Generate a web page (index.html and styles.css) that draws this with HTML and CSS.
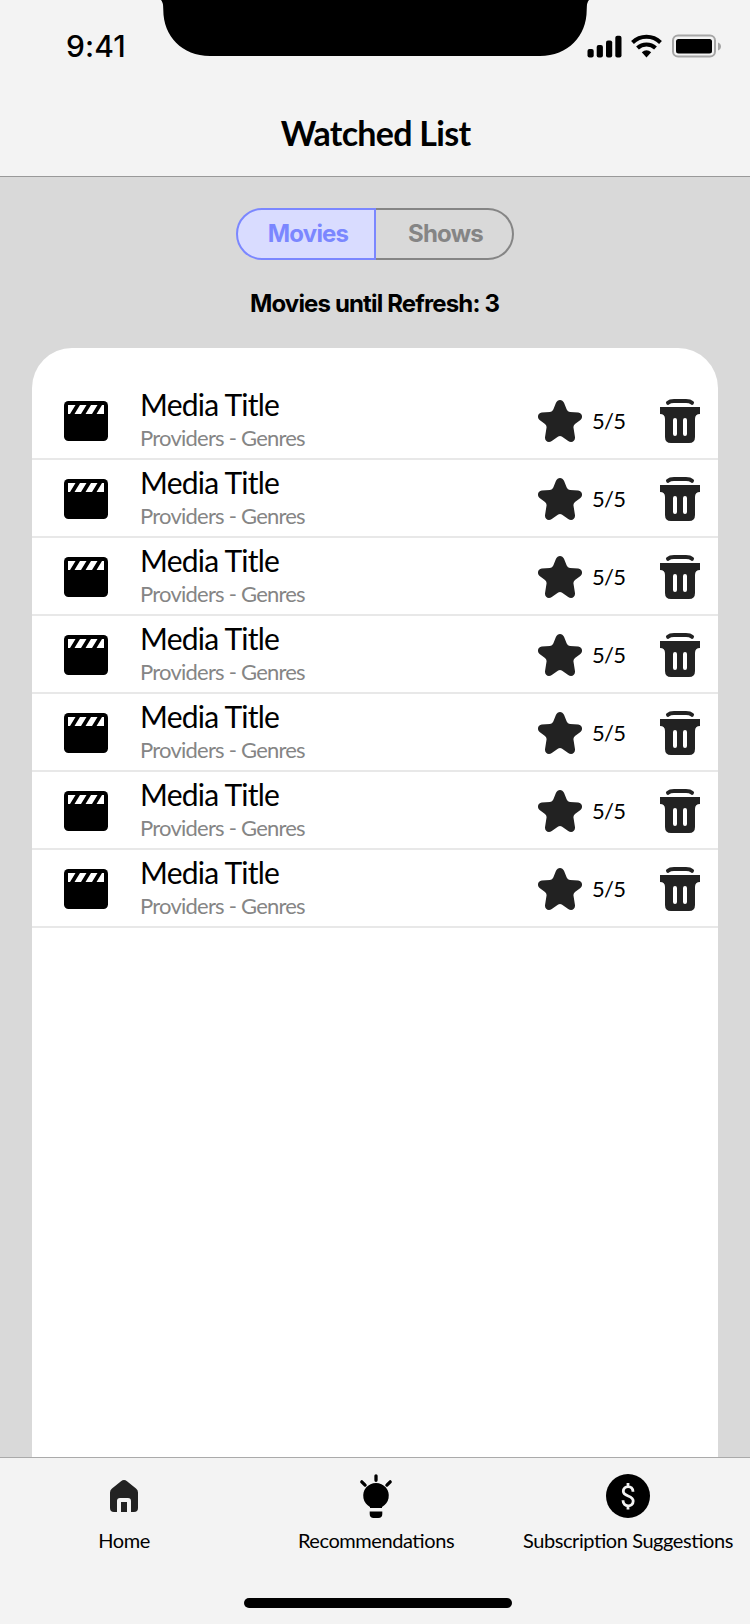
FILE: index.html
```html
<!DOCTYPE html>
<html lang="en">
<head>
<meta charset="utf-8">
<title>Watched List</title>
<link rel="stylesheet" href="styles.css">
</head>
<body>
<svg class="defs" aria-hidden="true">
  <symbol id="clapper" viewBox="0 0 44 44">
    <rect x="0" y="2" width="44" height="40" rx="4.5"/>
    <path class="cut" d="M4 6h7.500L6 15H4zM16 6h6.500l-5.500 9h-6.500zM27 6h6.500l-5.500 9h-6.500zM38 6h2v9h-7.500z"/>
  </symbol>
  <symbol id="star" viewBox="0 0 44 44">
    <path d="M18 3.800C19.500-.1 24.500-.1 26 3.800L28.700 10.500Q29.600 12.700 32 12.900L40.200 13.600C44.200 14 45.300 18.600 42.400 20.900L37 25Q35.100 26.500 35.500 28.800L37 38.300C37.300 42.400 33.300 44.300 30.200 42L23.800 37.500Q22 36.300 20.200 37.500L13.800 42C10.700 44.300 6.700 42.400 7 38.300L8.500 28.800Q8.900 26.500 7 25L1.600 20.900C-1.300 18.600-.2 14 3.800 13.600L12 12.900Q14.400 12.700 15.300 10.500Z"/>
  </symbol>
  <symbol id="trash" viewBox="0 0 40 44">
    <path class="lid" d="M8 3.800Q10 2 14 2h12q4 0 6 1.800"/>
    <path d="M0 8h40v7q-5 0-5 5v18q0 6-6 6H11q-6 0-6-6V20q0-5-5-5z"/>
    <path class="cut" d="M13 21a2 2 0 0 1 4 0v14a2 2 0 0 1-4 0zM23 21a2 2 0 0 1 4 0v14a2 2 0 0 1-4 0z"/>
  </symbol>
</svg>
<div class="screen">
  <header class="header">
    <svg class="notch" viewBox="0 0 428 56"><path d="M0 0h428q-2.300 2-2.300 10c0 26-18.700 46-46.700 46H49C21 56 2.300 36 2.300 10Q2.300 2 0 0z"/></svg>
    <div class="status">
      <span class="time">9:41</span>
      <svg class="indicators" viewBox="0 0 134 24">
        <rect x="0.500" y="15" width="6.200" height="8.500" rx="2"/><rect x="9.700" y="11" width="6.200" height="12.500" rx="2"/><rect x="19" y="6.500" width="6.200" height="17" rx="2"/><rect x="28.300" y="1.700" width="6.200" height="21.800" rx="2"/>
        <path class="wave" d="M45.500 8.500A20 20 0 0 1 73.500 8.500M50.500 14A13 13 0 0 1 68.500 14"/>
        <path d="M54.800 18.200Q59.500 14.400 64.200 18.200L59.500 23.500z"/>
        <rect class="case" x="86" y="1.500" width="42" height="21" rx="5"/>
        <rect x="89" y="5" width="36" height="14.500" rx="2.500"/>
        <path class="cap" d="M131 8.500q3 1.200 3 4t-3 4z"/>
      </svg>
    </div>
    <h1 class="title">Watched List</h1>
  </header>
  <main class="content">
    <div class="segments"><button class="segment active"><span>Movies</span></button><button class="segment"><span>Shows</span></button></div>
    <p class="refresh">Movies until Refresh: 3</p>
    <ul class="list" id="list"></ul>
  </main>
  <nav class="tabs">
    <a class="tab"><svg class="tab-icon" viewBox="0 0 44 44"><path class="soft" d="M19 7.200Q22 4.800 25 7.200L34 14.500Q36 16.200 36 18.500V34q0 4-4 4h-3V27q0-3-3-3h-8q-3 0-3 3v11h-3q-4 0-4-4V18.500Q8 16.200 10 14.500zM19 28h6v10h-6z"/></svg><span>Home</span></a>
    <a class="tab"><svg class="tab-icon" viewBox="0 0 44 44"><path d="M16 34v-1A12.800 12.800 0 1 1 28 33V34zM15.700 37.500h12.600v2.500q0 4-4 4h-4.600q-4 0-4-4z"/><path class="ray" d="M22 1.800v4.500M7.800 7.800l3.300 3.300M36.200 7.800l-3.300 3.300"/></svg><span>Recommendations</span></a>
    <a class="tab"><svg class="tab-icon" viewBox="0 0 44 44"><circle cx="22" cy="22" r="22"/><path class="dollar" d="M22 9v3.500M22 31.500V35.500M27 17.800C27 10.800 17.300 11 17.300 17.300C17.300 23 27.200 21 27.200 27C27.200 33.800 17 33.500 17 26.300"/></svg><span>Subscription Suggestions</span></a>
  </nav>
  <div class="gesture"><div class="pill"></div></div>
</div>
<template id="row">
  <li class="row">
    <svg class="clapper"><use href="#clapper"/></svg>
    <div class="media"><span class="name">Media Title</span><span class="meta">Providers - Genres</span></div>
    <svg class="star"><use href="#star"/></svg>
    <span class="score">5/5</span>
    <svg class="trash"><use href="#trash"/></svg>
  </li>
</template>
<script src="app.js"></script>
</body>
</html>
```
FILE: styles.css
```css
* { box-sizing: border-box; }
body { margin: 0; background: #f3f3f3; color: #000; font-family: Lato, sans-serif; }
.defs { position: absolute; width: 0; height: 0; }
.screen { width: 750px; height: 1624px; display: flex; flex-direction: column; overflow: hidden; }
.header { position: relative; height: 177px; flex: none; border-bottom: 1px solid #999; }
.notch { position: absolute; left: 161px; top: 0; width: 428px; height: 56px; }
.status { height: 92px; padding: 34px 29px 0 66px; display: flex; justify-content: space-between; align-items: flex-start; }
.time { font: 550 30px/24px Inter, sans-serif; letter-spacing: 0.1px; }
.indicators { width: 134px; height: 24px; }
.wave { fill: none; stroke: #000; stroke-width: 4; }
.case { fill: none; stroke: #a6a6a6; stroke-width: 2; }
.cap { fill: #a6a6a6; }
.title { margin: 19px 0 0; padding-left: 1px; text-align: center; font-size: 34px; line-height: 44px; font-weight: 700; letter-spacing: -0.72px; }
.content { flex: 1; min-height: 0; background: #d9d9d9; padding: 31px 32px 0; display: flex; flex-direction: column; align-items: center; }
.segments { display: flex; flex: none; width: 278px; height: 52px; }
.segment { flex: none; width: 138px; padding: 0 0 0 3px; border: 2px solid #858585; border-left: 0; border-radius: 0 26px 26px 0; background: none; color: #858585; font: 700 24px/30px Inter, sans-serif; letter-spacing: -0.8px; }
.segment.active { width: 140px; padding-left: 4px; border: 2px solid #7b87ff; border-radius: 26px 0 0 26px; background: #d9dcff; color: #7b87ff; }
.refresh { margin: 28px 0 0; padding-right: 1px; font: 700 24px/32px Inter, sans-serif; letter-spacing: -0.85px; }
.list { list-style: none; margin: 28px 0 0; padding: 34px 0 0; width: 100%; flex: 1; background: #fff; border-radius: 40px 40px 0 0; }
.row { height: 78px; border-bottom: 2px solid #e8e8e8; padding: 0 18px 0 32px; display: flex; align-items: center; }
.row svg { flex: none; }
.clapper { width: 44px; height: 44px; margin-top: 2px; }
.cut { fill: #fff; }
.media { flex: 1; margin-left: 32px; display: flex; flex-direction: column; }
.name { font-size: 30px; line-height: 34px; letter-spacing: -0.75px; margin-top: -2px; margin-bottom: 3px; }
.meta { font-size: 22px; line-height: 28px; letter-spacing: -0.77px; margin-bottom: -1px; color: #858585; }
.star { width: 44px; height: 44px; fill: #222; margin-top: 2px; }
.score { width: 68px; margin-left: 10px; margin-top: 2px; font-size: 22px; line-height: 28px; letter-spacing: -0.7px; }
.trash { width: 40px; height: 44px; fill: #222; margin-top: 2px; }
.lid { fill: none; stroke: #222; stroke-width: 4; stroke-linecap: round; }
.tabs { flex: none; height: 110px; margin: 0 -4px 0 -2px; border-top: 1px solid #aaa; padding-top: 16px; display: grid; grid-template-columns: repeat(3, 252px); }
.tab { display: flex; flex-direction: column; align-items: center; gap: 9px; font-size: 20px; line-height: 26px; letter-spacing: -0.43px; font-feature-settings: "liga" 1; }
.tab-icon { width: 44px; height: 44px; }
.soft { fill: #222; }
.ray { fill: none; stroke: #000; stroke-width: 3.3; stroke-linecap: round; }
.dollar { fill: none; stroke: #f3f3f3; stroke-width: 2.8; }
.gesture { flex: none; height: 57px; padding: 31px 0 0 244px; }
.pill { width: 268px; height: 10px; border-radius: 5px; background: #000; }
```
FILE: app.js
```js
const list = document.getElementById("list");
const row = document.getElementById("row");
for (let i = 0; i < 7; i++) list.append(row.content.cloneNode(true));
```
